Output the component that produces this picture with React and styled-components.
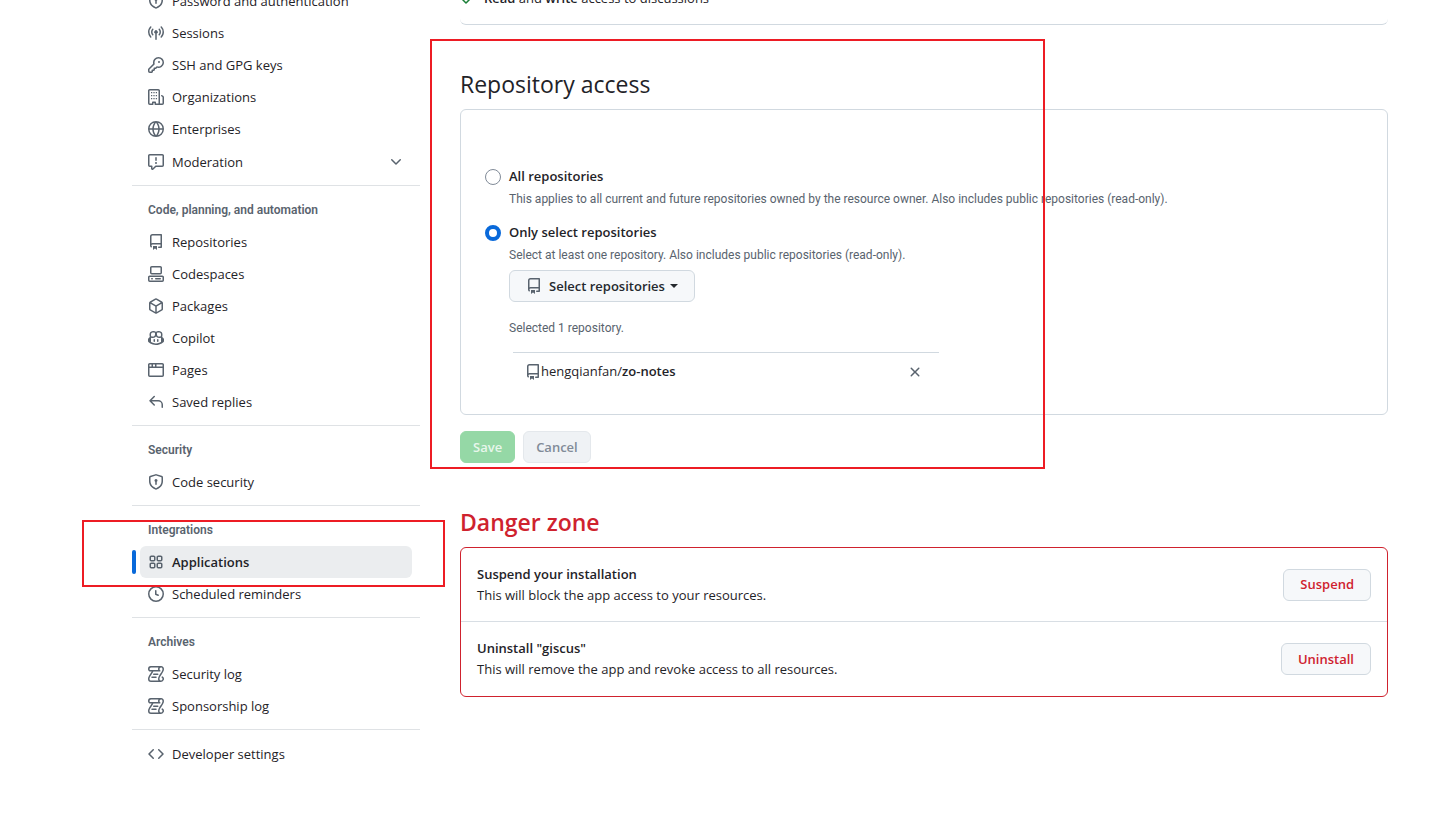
import React from "react";
import styled, { createGlobalStyle, css } from "styled-components";

const Global = createGlobalStyle`
  *, *::before, *::after { box-sizing: border-box; }
  body {
    margin: 0;
    background: #ffffff;
    color: #1f2328;
    font-family: "Segoe UI", "Open Sans", "Noto Sans", sans-serif;
    font-size: 13px;
    line-height: 21px;
  }
  h2, h3, p, ul { margin: 0; padding: 0; }
  ul { list-style: none; }
  strong { font-weight: 600; }
  button { font: inherit; cursor: pointer; }
`;

const smallText = css`
  font-family: "Segoe UI", Roboto, sans-serif;
  font-size: 12px;
  color: #59636e;
`;

const paths = {
  shieldLock: "m8.533.133 5.25 1.68A1.75 1.75 0 0 1 15 3.48V7c0 1.566-.32 3.182-1.303 4.682-.983 1.498-2.585 2.813-5.032 3.855a1.697 1.697 0 0 1-1.33 0c-2.447-1.042-4.049-2.357-5.032-3.855C1.32 10.182 1 8.566 1 7V3.48a1.75 1.75 0 0 1 1.217-1.667l5.25-1.68a1.748 1.748 0 0 1 1.066 0Zm-.61 1.429.001.001-5.25 1.68a.251.251 0 0 0-.174.237V7c0 1.36.275 2.666 1.057 3.859.784 1.194 2.121 2.342 4.366 3.298a.196.196 0 0 0 .154 0c2.245-.957 3.582-2.103 4.366-3.297C13.225 9.666 13.5 8.358 13.5 7V3.48a.25.25 0 0 0-.174-.238l-5.25-1.68a.25.25 0 0 0-.153 0ZM9.5 6.5c0 .536-.286 1.032-.75 1.3v2.45a.75.75 0 0 1-1.5 0V7.8A1.5 1.5 0 1 1 9.5 6.5Z",
  broadcast: "M8.75 8.582v5.668a.75.75 0 0 1-1.5 0V8.582a1.75 1.75 0 1 1 1.5 0Zm3.983-7.125a.75.75 0 0 1 1.06.026A7.976 7.976 0 0 1 16 7c0 2.139-.84 4.083-2.207 5.517a.75.75 0 1 1-1.086-1.034A6.474 6.474 0 0 0 14.5 7a6.474 6.474 0 0 0-1.793-4.483.75.75 0 0 1 .026-1.06Zm-9.466 0c.3.286.312.76.026 1.06A6.474 6.474 0 0 0 1.5 7a6.47 6.47 0 0 0 1.793 4.483.75.75 0 0 1-1.086 1.034A7.973 7.973 0 0 1 0 7c0-2.139.84-4.083 2.207-5.517a.75.75 0 0 1 1.06-.026Zm8.556 2.321A4.988 4.988 0 0 1 13 7a4.988 4.988 0 0 1-1.177 3.222.75.75 0 1 1-1.146-.967A3.487 3.487 0 0 0 11.5 7c0-.86-.309-1.645-.823-2.255a.75.75 0 0 1 1.146-.967Zm-6.492.958A3.48 3.48 0 0 0 4.5 7a3.48 3.48 0 0 0 .823 2.255.75.75 0 0 1-1.146.967A4.981 4.981 0 0 1 3 7a4.982 4.982 0 0 1 1.188-3.236.75.75 0 1 1 1.143.972Z",
  key: "M10.5 0a5.499 5.499 0 1 1-1.288 10.848l-.932.932a.749.749 0 0 1-.53.22H7v.75a.749.749 0 0 1-.22.53l-.5.5a.749.749 0 0 1-.53.22H5v.75a.749.749 0 0 1-.22.53l-.5.5a.749.749 0 0 1-.53.22h-2A1.75 1.75 0 0 1 0 14.25v-2c0-.199.079-.389.22-.53l4.932-4.932A5.5 5.5 0 0 1 10.5 0Zm-4 5.5c-.001.431.069.86.205 1.269a.75.75 0 0 1-.181.768L1.5 12.56v1.69c0 .138.112.25.25.25h1.69l.06-.06v-1.19a.75.75 0 0 1 .75-.75h1.19l.06-.06v-1.19a.75.75 0 0 1 .75-.75h1.19l1.023-1.025a.75.75 0 0 1 .768-.18A4 4 0 1 0 6.5 5.5ZM11 6a1 1 0 1 1 0-2 1 1 0 0 1 0 2Z",
  organization: "M1.75 16A1.75 1.75 0 0 1 0 14.25V1.75C0 .784.784 0 1.75 0h8.5C11.216 0 12 .784 12 1.75v12.5c0 .085-.006.168-.018.25h2.268a.25.25 0 0 0 .25-.25V8.285a.25.25 0 0 0-.111-.208l-1.055-.703a.749.749 0 1 1 .832-1.248l1.055.703c.487.325.779.871.779 1.456v5.965A1.75 1.75 0 0 1 14.25 16h-3.5a.766.766 0 0 1-.197-.026c-.099.017-.2.026-.303.026h-3a.75.75 0 0 1-.75-.75V14h-1v1.25a.75.75 0 0 1-.75.75Zm-.25-1.75c0 .138.112.25.25.25H4v-1.25a.75.75 0 0 1 .75-.75h2.5a.75.75 0 0 1 .75.75v1.25h2.25a.25.25 0 0 0 .25-.25V1.75a.25.25 0 0 0-.25-.25h-8.5a.25.25 0 0 0-.25.25Z M3 3h1.25v1.25H3Z M5.375 3h1.25v1.25H5.375Z M7.75 3H9v1.25H7.75Z M3 6h1.25v1.25H3Z M5.375 6h1.25v1.25H5.375Z M7.75 6H9v1.25H7.75Z M3 9h1.25v1.25H3Z M5.375 9h1.25v1.25H5.375Z M7.75 9H9v1.25H7.75Z",
  globe: "M8 0a8 8 0 1 1 0 16A8 8 0 0 1 8 0ZM5.78 8.75a9.64 9.64 0 0 0 1.363 4.177c.255.426.542.832.857 1.215.245-.296.551-.705.857-1.215A9.64 9.64 0 0 0 10.22 8.75Zm4.44-1.5a9.64 9.64 0 0 0-1.363-4.177c-.307-.51-.612-.919-.857-1.215a9.927 9.927 0 0 0-.857 1.215A9.64 9.64 0 0 0 5.78 7.25Zm-5.944 1.5H1.543a6.507 6.507 0 0 0 4.666 5.5c-.123-.181-.24-.365-.352-.552-.715-1.192-1.437-2.874-1.581-4.948Zm-2.733-1.5h2.733c.144-2.074.866-3.756 1.58-4.948.12-.197.237-.381.353-.552a6.507 6.507 0 0 0-4.666 5.5Zm10.181 1.5c-.144 2.074-.866 3.756-1.58 4.948-.12.197-.237.381-.353.552a6.507 6.507 0 0 0 4.666-5.5Zm2.733-1.5a6.507 6.507 0 0 0-4.666-5.5c.123.181.24.365.353.552.714 1.192 1.436 2.874 1.58 4.948Z",
  report: "M0 1.75C0 .784.784 0 1.75 0h12.5C15.216 0 16 .784 16 1.75v9.5A1.75 1.75 0 0 1 14.25 13H8.06l-2.573 2.573A1.458 1.458 0 0 1 3 14.543V13H1.75A1.75 1.75 0 0 1 0 11.25Zm1.75-.25a.25.25 0 0 0-.25.25v9.5c0 .138.112.25.25.25h2a.75.75 0 0 1 .75.75v2.19l2.72-2.72a.749.749 0 0 1 .53-.22h6.5a.25.25 0 0 0 .25-.25v-9.5a.25.25 0 0 0-.25-.25Zm7 2.25v2.5a.75.75 0 0 1-1.5 0v-2.5a.75.75 0 0 1 1.5 0ZM9 9a1 1 0 1 1-2 0 1 1 0 0 1 2 0Z",
  chevronDown: "M12.78 5.22a.749.749 0 0 1 0 1.06l-4.25 4.25a.749.749 0 0 1-1.06 0L3.22 6.28a.749.749 0 1 1 1.06-1.06L8 8.939l3.72-3.719a.749.749 0 0 1 1.06 0Z",
  repo: "M2 2.5A2.5 2.5 0 0 1 4.5 0h8.75a.75.75 0 0 1 .75.75v12.5a.75.75 0 0 1-.75.75h-2.5a.75.75 0 0 1 0-1.5h1.75v-2h-8a1 1 0 0 0-.714 1.7.75.75 0 1 1-1.072 1.05A2.495 2.495 0 0 1 2 11.5Zm10.5-1h-8a1 1 0 0 0-1 1v6.708A2.486 2.486 0 0 1 4.5 9h8ZM5 12.25a.25.25 0 0 1 .25-.25h3.5a.25.25 0 0 1 .25.25v3.25a.25.25 0 0 1-.4.2l-1.45-1.087a.249.249 0 0 0-.3 0L5.4 15.7a.25.25 0 0 1-.4-.2Z",
  codespaces: "M0 11.25c0-.966.784-1.75 1.75-1.75h12.5c.966 0 1.75.784 1.75 1.75v3A1.75 1.75 0 0 1 14.25 16H1.75A1.75 1.75 0 0 1 0 14.25Zm2-9.5C2 .784 2.784 0 3.75 0h8.5C13.216 0 14 .784 14 1.75v5a1.75 1.75 0 0 1-1.75 1.75h-8.5A1.75 1.75 0 0 1 2 6.75Zm1.75-.25a.25.25 0 0 0-.25.25v5c0 .138.112.25.25.25h8.5a.25.25 0 0 0 .25-.25v-5a.25.25 0 0 0-.25-.25Zm-2 9.5a.25.25 0 0 0-.25.25v3c0 .138.112.25.25.25h12.5a.25.25 0 0 0 .25-.25v-3a.25.25 0 0 0-.25-.25Z M7 12.75a.75.75 0 0 1 .75-.75h4.5a.75.75 0 0 1 0 1.5h-4.5a.75.75 0 0 1-.75-.75Zm-4 0a.75.75 0 0 1 .75-.75h.5a.75.75 0 0 1 0 1.5h-.5a.75.75 0 0 1-.75-.75Z",
  package: "m8.878.392 5.25 3.045c.54.314.872.89.872 1.514v6.098a1.75 1.75 0 0 1-.872 1.514l-5.25 3.045a1.75 1.75 0 0 1-1.756 0l-5.25-3.045A1.75 1.75 0 0 1 1 11.049V4.951c0-.624.332-1.201.872-1.514L7.122.392a1.75 1.75 0 0 1 1.756 0ZM7.875 1.69l-4.63 2.685L8 7.133l4.755-2.758-4.63-2.685a.248.248 0 0 0-.25 0ZM2.5 5.677v5.372c0 .09.047.171.125.216l4.625 2.683V8.432Zm6.25 8.271 4.625-2.683a.25.25 0 0 0 .125-.216V5.677L8.75 8.432Z",
  copilot: "M7.998 15.035c-4.562 0-7.873-2.914-7.998-3.749V9.338c.085-.628.677-1.686 1.588-2.065.013-.07.024-.143.036-.218.029-.183.06-.384.126-.612-.201-.508-.254-1.084-.254-1.656 0-.87.128-1.769.693-2.484.579-.733 1.494-1.124 2.724-1.261 1.206-.134 2.262.034 2.944.765.05.053.096.108.139.165.044-.057.094-.112.143-.165.682-.731 1.738-.899 2.944-.765 1.23.137 2.145.528 2.724 1.261.566.715.693 1.614.693 2.484 0 .572-.053 1.148-.254 1.656.066.228.098.429.126.612.012.076.024.148.037.218.924.385 1.522 1.471 1.591 2.095v1.872c0 .766-3.351 3.795-8.002 3.795Zm0-1.485c2.28 0 4.584-1.11 5.002-1.433V7.862l-.023-.116c-.49.21-1.075.291-1.727.291-1.146 0-2.059-.327-2.71-.991A3.222 3.222 0 0 1 8 6.303a3.24 3.24 0 0 1-.544.743c-.65.664-1.563.991-2.71.991-.652 0-1.236-.081-1.727-.291l-.023.116v4.255c.419.323 2.722 1.433 5.002 1.433ZM6.762 2.83c-.193-.206-.637-.413-1.682-.297-1.019.113-1.479.404-1.713.7-.247.312-.369.789-.369 1.554 0 .793.129 1.171.308 1.371.162.181.519.379 1.442.379.853 0 1.339-.235 1.638-.54.315-.322.527-.827.617-1.553.117-.935-.037-1.395-.241-1.614Zm4.155-.297c-1.044-.116-1.488.091-1.681.297-.204.219-.359.679-.242 1.614.091.726.303 1.231.618 1.553.299.305.784.54 1.638.54.922 0 1.28-.198 1.442-.379.179-.2.308-.578.308-1.371 0-.765-.123-1.242-.37-1.554-.233-.296-.693-.587-1.713-.7Z M6.25 9.037a.75.75 0 0 1 .75.75v1.501a.75.75 0 0 1-1.5 0V9.787a.75.75 0 0 1 .75-.75Zm4.25.75v1.501a.75.75 0 0 1-1.5 0V9.787a.75.75 0 0 1 1.5 0Z",
  browser: "M0 2.75C0 1.784.784 1 1.75 1h12.5c.966 0 1.75.784 1.75 1.75v10.5A1.75 1.75 0 0 1 14.25 15H1.75A1.75 1.75 0 0 1 0 13.25ZM14.5 6h-13v7.25c0 .138.112.25.25.25h12.5a.25.25 0 0 0 .25-.25Zm-6-3.5v2h6V2.75a.25.25 0 0 0-.25-.25ZM5 2.5v2h2v-2Zm-3.25 0a.25.25 0 0 0-.25.25V4.5h2v-2Z",
  reply: "M6.78 1.97a.75.75 0 0 1 0 1.06L3.81 6h6.44A4.75 4.75 0 0 1 15 10.75v2.5a.75.75 0 0 1-1.5 0v-2.5a3.25 3.25 0 0 0-3.25-3.25H3.81l2.97 2.97a.749.749 0 0 1-.326 1.275.749.749 0 0 1-.734-.215L1.47 7.28a.75.75 0 0 1 0-1.06l4.25-4.25a.75.75 0 0 1 1.06 0Z",
  apps: "M1.5 3.25c0-.966.784-1.75 1.75-1.75h2.5c.966 0 1.75.784 1.75 1.75v2.5A1.75 1.75 0 0 1 5.75 7.5h-2.5A1.75 1.75 0 0 1 1.5 5.75Zm7 0c0-.966.784-1.75 1.75-1.75h2.5c.966 0 1.75.784 1.75 1.75v2.5a1.75 1.75 0 0 1-1.75 1.75h-2.5A1.75 1.75 0 0 1 8.5 5.75Zm-7 7c0-.966.784-1.75 1.75-1.75h2.5c.966 0 1.75.784 1.75 1.75v2.5a1.75 1.75 0 0 1-1.75 1.75h-2.5a1.75 1.75 0 0 1-1.75-1.75Zm7 0c0-.966.784-1.75 1.75-1.75h2.5c.966 0 1.75.784 1.75 1.75v2.5a1.75 1.75 0 0 1-1.75 1.75h-2.5a1.75 1.75 0 0 1-1.75-1.75ZM3.25 3a.25.25 0 0 0-.25.25v2.5c0 .138.112.25.25.25h2.5A.25.25 0 0 0 6 5.75v-2.5A.25.25 0 0 0 5.75 3Zm7 0a.25.25 0 0 0-.25.25v2.5c0 .138.112.25.25.25h2.5a.25.25 0 0 0 .25-.25v-2.5a.25.25 0 0 0-.25-.25Zm-7 7a.25.25 0 0 0-.25.25v2.5c0 .138.112.25.25.25h2.5a.25.25 0 0 0 .25-.25v-2.5a.25.25 0 0 0-.25-.25Zm7 0a.25.25 0 0 0-.25.25v2.5c0 .138.112.25.25.25h2.5a.25.25 0 0 0 .25-.25v-2.5a.25.25 0 0 0-.25-.25Z",
  clock: "M8 0a8 8 0 1 1 0 16A8 8 0 0 1 8 0ZM1.5 8a6.5 6.5 0 1 0 13 0 6.5 6.5 0 0 0-13 0Zm7-3.25v2.992l2.028.812a.75.75 0 0 1-.557 1.392l-2.5-1A.751.751 0 0 1 7 8.25v-3.5a.75.75 0 0 1 1.5 0Z",
  log: "M5 8.25a.75.75 0 0 1 .75-.75h4a.75.75 0 0 1 0 1.5h-4A.75.75 0 0 1 5 8.25ZM4 10.5A.75.75 0 0 0 4 12h4a.75.75 0 0 0 0-1.5H4Z M13-.005c1.654 0 3 1.328 3 3 0 .982-.338 1.933-.783 2.818-.443.879-1.028 1.758-1.582 2.588l-.011.017c-.568.853-1.104 1.659-1.501 2.446-.398.789-.623 1.494-.623 2.136a1.5 1.5 0 1 0 2.333-1.248.75.75 0 0 1 .834-1.246A3 3 0 0 1 13 16H3a3 3 0 0 1-3-3c0-1.582.891-3.135 1.777-4.506.209-.322.418-.637.623-.946.473-.709.923-1.386 1.287-2.048H2.51c-.576 0-1.381-.133-1.907-.783A2.68 2.68 0 0 1 0 2.995a3 3 0 0 1 3-3Zm0 1.5a1.5 1.5 0 0 0-1.5 1.5c0 .476.223.834.667 1.132A.75.75 0 0 1 11.75 5.5H5.368c-.467 1.003-1.141 2.015-1.773 2.963-.192.289-.381.571-.558.845C2.13 10.711 1.5 11.916 1.5 13A1.5 1.5 0 0 0 3 14.5h7.401A2.989 2.989 0 0 1 10 13c0-.979.338-1.928.784-2.812.441-.874 1.023-1.748 1.575-2.576l.017-.026c.568-.853 1.103-1.658 1.501-2.448.398-.79.623-1.497.623-2.143 0-.838-.669-1.5-1.5-1.5Zm-10 0a1.5 1.5 0 0 0-1.5 1.5c0 .321.1.569.27.778.097.12.325.227.74.227h7.674A2.737 2.737 0 0 1 10 2.995c0-.546.146-1.059.401-1.5Z",
  code: "m11.28 3.22 4.25 4.25a.75.75 0 0 1 0 1.06l-4.25 4.25a.749.749 0 0 1-1.275-.326.749.749 0 0 1 .215-.734L13.94 8l-3.72-3.72a.749.749 0 0 1 .326-1.275.749.749 0 0 1 .734.215Zm-6.56 0a.751.751 0 0 1 1.042.018.751.751 0 0 1 .018 1.042L2.06 8l3.72 3.72a.749.749 0 0 1-.326 1.275.749.749 0 0 1-.734-.215L.47 8.53a.75.75 0 0 1 0-1.06Z",
  check: "M13.78 4.22a.75.75 0 0 1 0 1.06l-7.25 7.25a.75.75 0 0 1-1.06 0L2.22 9.28a.751.751 0 0 1 .018-1.042.751.751 0 0 1 1.042-.018L6 10.94l6.72-6.72a.75.75 0 0 1 1.06 0Z",
  x: "M3.72 3.72a.75.75 0 0 1 1.06 0L8 6.94l3.22-3.22a.749.749 0 0 1 1.275.326.749.749 0 0 1-.215.734L9.06 8l3.22 3.22a.749.749 0 0 1-.326 1.275.749.749 0 0 1-.734-.215L8 9.06l-3.22 3.22a.751.751 0 0 1-1.042-.018.751.751 0 0 1-.018-1.042L6.94 8 3.72 4.78a.75.75 0 0 1 0-1.06Z",
};

const Svg = styled.svg`
  flex: none;
  width: 16px;
  height: 16px;
  fill: currentColor;
  color: ${(p) => p.$color || "#59636e"};
`;

const Icon = ({ name, color }) => (
  <Svg viewBox="0 0 16 16" aria-hidden="true" $color={color}>
    <path d={paths[name]} />
  </Svg>
);

/* Page frame: the settings page is scrolled part of the way down */
const Viewport = styled.div`
  position: relative;
  min-height: 100vh;
  overflow: hidden;
`;

const Page = styled.div`
  display: flex;
  align-items: flex-start;
  gap: 40px;
  margin-top: -15px;
  padding: 0 50px 64px 132px;
`;

const Sidebar = styled.nav`
  flex: 0 0 288px;
`;

const NavList = styled.ul`
  padding: 0 8px;
`;

const Divider = styled.hr`
  height: 1px;
  margin: 7px 0 8px;
  border: 0;
  background: #dfe2e5;
`;

const NavHeading = styled.h3`
  ${smallText}
  padding: 0 16px;
  line-height: 32px;
  font-weight: 600;
`;

const navItem = css`
  display: flex;
  align-items: center;
  gap: 8px;
  width: 100%;
  min-height: 32px;
  padding: 0 8px;
  border: 0;
  border-radius: 6px;
  background: ${(p) => (p.$current ? "#ebedef" : "transparent")};
  color: #1f2328;
  font-weight: ${(p) => (p.$current ? 600 : 400)};
  text-align: left;
  text-decoration: none;
`;

const NavLink = styled.a`
  ${navItem}
`;

const NavToggle = styled.button`
  ${navItem}
  min-height: 33px;
  padding-top: 1px;
`;

const NavLabel = styled.span`
  flex: 1;
`;

const NavEntry = styled.li`
  position: relative;
  ${(p) =>
    p.$current &&
    css`
      &::before {
        content: "";
        position: absolute;
        top: 4px;
        bottom: 4px;
        left: -8px;
        width: 4px;
        border-radius: 6px;
        background: #0969da;
      }
    `}
`;

const Main = styled.main`
  flex: 1;
  min-width: 0;
`;

const Box = styled.section`
  border: 1px solid ${(p) => (p.$danger ? "#cf222e" : "#d1d9e0")};
  border-radius: 6px;
`;

const PermissionBox = styled.section`
  border-bottom: 1px solid #d1d9e0;
  border-radius: 0 0 6px 6px;
  padding: 3px 0 15px;
`;

const Permission = styled.p`
  display: flex;
  align-items: center;
  gap: 8px;
`;

const Title = styled.h2`
  margin-top: 43px;
  margin-bottom: 9px;
  font-size: 23px;
  line-height: 32px;
  font-weight: ${(p) => (p.$danger ? 600 : 400)};
  color: ${(p) => (p.$danger ? "#cf222e" : "#1f2328")};
`;

const AccessBox = styled(Box)`
  padding: 56px 24px 24px;
`;

const Option = styled.div`
  display: grid;
  grid-template-columns: 16px 1fr;
  column-gap: 8px;
  align-items: center;
  & + & {
    margin-top: 13px;
  }
`;

const Radio = styled.input`
  appearance: none;
  width: 16px;
  height: 16px;
  margin: 0;
  border: 1px solid #818b98;
  border-radius: 50%;
  background: #ffffff;
  &:checked {
    border: 4px solid #0969da;
  }
`;

const OptionLabel = styled.label`
  font-weight: 600;
`;

const Hint = styled.p`
  ${smallText}
  grid-column: 2;
  margin-top: 2px;
  line-height: 20px;
`;

const Selection = styled.div`
  grid-column: 2;
  display: flex;
  flex-direction: column;
  align-items: flex-start;
  padding-top: 5px;
`;

const Button = styled.button`
  display: inline-flex;
  align-items: center;
  justify-content: center;
  height: 32px;
  padding: 0 ${(p) => p.$pad || 12}px;
  border: 1px solid #d1d9e0;
  border-radius: 6px;
  background: #f6f8fa;
  color: #25292e;
  font-weight: 600;
  white-space: nowrap;
`;

const PickerButton = styled(Button)`
  gap: 7px;
  padding: 0 16px;
`;

const Caret = styled.span`
  margin-left: -2px;
  border: 4px solid transparent;
  border-top-color: currentColor;
  border-bottom: 0;
`;

const SaveButton = styled(Button)`
  border-color: #95d8a6;
  background: #95d8a6;
  color: rgba(255, 255, 255, 0.8);
`;

const CancelButton = styled(Button)`
  border-color: #e4e8ec;
  background: #eff2f5;
  color: #818b98;
`;

const DangerButton = styled(Button)`
  color: #cf222e;
`;

const Count = styled.p`
  ${smallText}
  margin-top: 16px;
  line-height: 20px;
`;

const RepoList = styled.ul`
  width: 426px;
  max-width: 100%;
  margin: 14px 4px 0;
  border-top: 1px solid #d1d9e0;
`;

const RepoRow = styled.li`
  display: flex;
  align-items: center;
  justify-content: space-between;
  padding: 8px 16px 8px 12px;
`;

const RepoName = styled.span`
  display: flex;
  align-items: center;
`;

const RemoveButton = styled.button`
  display: flex;
  padding: 0;
  border: 0;
  background: none;
`;

const Actions = styled.div`
  display: flex;
  gap: 8px;
  margin-top: 16px;
`;

const DangerRow = styled.div`
  display: flex;
  align-items: center;
  justify-content: space-between;
  min-height: 74px;
  padding: 0 16px;
  &:not(:last-child) {
    border-bottom: 1px solid #d8dee4;
  }
`;

/* Red marker frames laid over the page */
const Marker = styled.div`
  position: absolute;
  top: ${(p) => p.$y}px;
  left: ${(p) => p.$x}px;
  width: ${(p) => p.$w}px;
  height: ${(p) => p.$h}px;
  border: 2px solid #ed1c24;
  pointer-events: none;
`;

const groups = [
  {
    items: [
      { icon: "shieldLock", label: "Password and authentication" },
      { icon: "broadcast", label: "Sessions" },
      { icon: "key", label: "SSH and GPG keys" },
      { icon: "organization", label: "Organizations" },
      { icon: "globe", label: "Enterprises" },
      { icon: "report", label: "Moderation", toggle: true },
    ],
  },
  {
    title: "Code, planning, and automation",
    items: [
      { icon: "repo", label: "Repositories" },
      { icon: "codespaces", label: "Codespaces" },
      { icon: "package", label: "Packages" },
      { icon: "copilot", label: "Copilot" },
      { icon: "browser", label: "Pages" },
      { icon: "reply", label: "Saved replies" },
    ],
  },
  { title: "Security", items: [{ icon: "shieldLock", label: "Code security" }] },
  {
    title: "Integrations",
    items: [
      { icon: "apps", label: "Applications", current: true },
      { icon: "clock", label: "Scheduled reminders" },
    ],
  },
  {
    title: "Archives",
    items: [
      { icon: "log", label: "Security log" },
      { icon: "log", label: "Sponsorship log" },
    ],
  },
  { items: [{ icon: "code", label: "Developer settings" }] },
];

const NavGroup = ({ title, items }) => (
  <>
    {title && <NavHeading>{title}</NavHeading>}
    <NavList>
      {items.map((it) => (
        <NavEntry key={it.label} $current={it.current}>
          {it.toggle ? (
            <NavToggle type="button" aria-expanded="false">
              <Icon name={it.icon} />
              <NavLabel>{it.label}</NavLabel>
              <Icon name="chevronDown" />
            </NavToggle>
          ) : (
            <NavLink href="#" $current={it.current} aria-current={it.current ? "page" : undefined}>
              <Icon name={it.icon} />
              <NavLabel>{it.label}</NavLabel>
            </NavLink>
          )}
        </NavEntry>
      ))}
    </NavList>
  </>
);

export default function App() {
  return (
    <Viewport>
      <Global />
      <Page>
        <Sidebar aria-label="Settings">
          {groups.map((g, i) => (
            <React.Fragment key={i}>
              {i > 0 && <Divider />}
              <NavGroup {...g} />
            </React.Fragment>
          ))}
        </Sidebar>

        <Main>
          <PermissionBox>
            <Permission>
              <Icon name="check" color="#1a7f37" />
              <span>
                <strong>Read</strong> and <strong>write</strong> access to discussions
              </span>
            </Permission>
          </PermissionBox>

          <Title>Repository access</Title>
          <AccessBox>
            <Option>
              <Radio type="radio" name="access" id="access-all" />
              <OptionLabel htmlFor="access-all">All repositories</OptionLabel>
              <Hint>
                This applies to all current and future repositories owned by the resource owner. Also includes public
                repositories (read-only).
              </Hint>
            </Option>
            <Option>
              <Radio type="radio" name="access" id="access-select" defaultChecked />
              <OptionLabel htmlFor="access-select">Only select repositories</OptionLabel>
              <Hint>Select at least one repository. Also includes public repositories (read-only).</Hint>
              <Selection>
                <PickerButton type="button">
                  <Icon name="repo" />
                  Select repositories
                  <Caret />
                </PickerButton>
                <Count>Selected 1 repository.</Count>
                <RepoList>
                  <RepoRow>
                    <RepoName>
                      <Icon name="repo" />
                      <span>
                        hengqianfan/<strong>zo-notes</strong>
                      </span>
                    </RepoName>
                    <RemoveButton type="button" aria-label="Remove">
                      <Icon name="x" />
                    </RemoveButton>
                  </RepoRow>
                </RepoList>
              </Selection>
            </Option>
          </AccessBox>
          <Actions>
            <SaveButton type="submit" disabled>
              Save
            </SaveButton>
            <CancelButton type="button" disabled>
              Cancel
            </CancelButton>
          </Actions>

          <Title $danger>Danger zone</Title>
          <Box $danger>
            <DangerRow>
              <div>
                <strong>Suspend your installation</strong>
                <p>This will block the app access to your resources.</p>
              </div>
              <DangerButton type="button" $pad={16}>
                Suspend
              </DangerButton>
            </DangerRow>
            <DangerRow>
              <div>
                <strong>Uninstall "giscus"</strong>
                <p>This will remove the app and revoke access to all resources.</p>
              </div>
              <DangerButton type="button" $pad={16}>
                Uninstall
              </DangerButton>
            </DangerRow>
          </Box>
        </Main>
      </Page>
      <Marker $x={430} $y={39} $w={615} $h={430} />
      <Marker $x={82} $y={520} $w={363} $h={67} />
    </Viewport>
  );
}
